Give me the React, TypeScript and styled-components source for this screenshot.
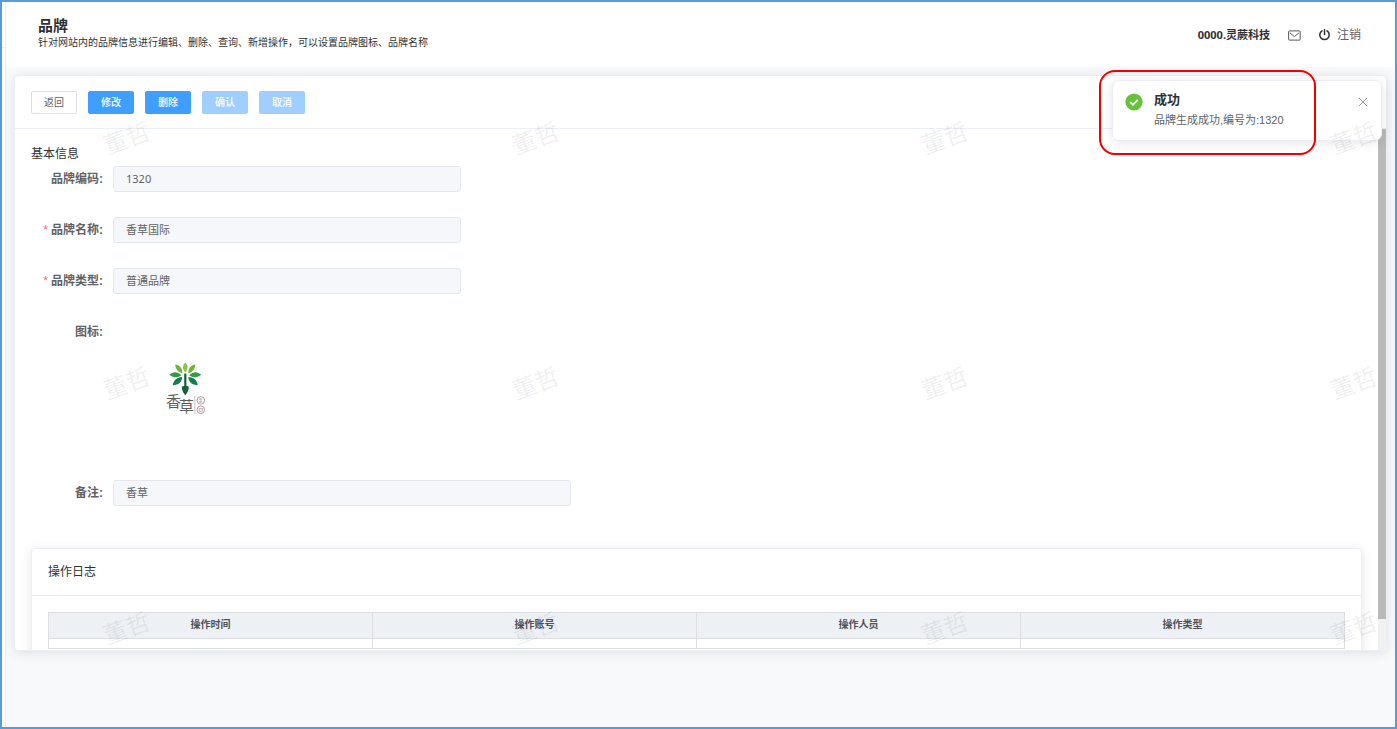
import React from 'react';
import styled, { createGlobalStyle, css } from 'styled-components';

const Global = createGlobalStyle`
  *, *::before, *::after { box-sizing: border-box; }
  body {
    margin: 0;
    color: #303133;
    background: #f8f9fb;
    font-family: "Liberation Sans", "Noto Sans CJK SC", sans-serif;
    font-size: 12px;
    line-height: 18px;
  }
  button, input { font-family: inherit; }
`;

const Frame = styled.div`
  position: relative;
  display: flex;
  height: 100vh;
  min-height: 480px;
  border: 2px solid #5b9bd5;
  overflow: hidden;
`;

const SideEdge = styled.aside`
  flex: none;
  width: 4px;
  background: #fff;
  border-right: 1px solid #ececee;
`;

const SideEdgeHead = styled.div`
  height: 46px;
  border-bottom: 1px solid #ececee;
`;

const Page = styled.div`
  flex: 1;
  min-width: 0;
  display: flex;
  flex-direction: column;
`;

const Header = styled.header`
  flex: none;
  display: flex;
  justify-content: space-between;
  height: 65px;
  padding: 15px 34px 0 32px;
  background: #fff;
`;

const PageTitle = styled.h1`
  margin: 0;
  font-size: 15px;
  line-height: 18px;
  font-weight: 700;
`;

const PageNote = styled.p`
  margin: 0;
  font-size: 10px;
  line-height: 16px;
  color: #303133;
`;

const Account = styled.div`
  display: flex;
  align-items: center;
  height: 36px;
  gap: 18px;
`;

const UserName = styled.span`
  font-family: "Noto Sans", "Noto Sans CJK SC", sans-serif;
  font-size: 11px;
  font-weight: 700;
`;

const HeaderButton = styled.button`
  display: flex;
  align-items: center;
  gap: 7px;
  padding: 0;
  border: 0;
  background: none;
  color: #606266;
  font-size: 12px;
  line-height: 18px;
`;

const Main = styled.main`
  flex: 1;
  min-height: 0;
  display: flex;
  padding: 8px 8px 76px;
`;

const Panel = styled.section`
  flex: 1;
  min-width: 0;
  display: flex;
  flex-direction: column;
  background: #fff;
  border: 1px solid #ebeef5;
  border-radius: 4px;
  box-shadow: 0 2px 12px rgba(0, 0, 0, 0.1);
  overflow: hidden;
`;

const Toolbar = styled.div`
  flex: none;
  display: flex;
  gap: 11px;
  height: 53px;
  padding: 15px 16px 14px;
  border-bottom: 1px solid #ebeef5;
`;

const Button = styled.button<{ $primary?: boolean }>`
  width: 46px;
  height: 23px;
  padding: 0;
  border: 1px solid #dcdfe6;
  border-radius: 2px;
  background: #fff;
  color: #606266;
  font-size: 10px;
  line-height: 20px;
  ${(p) =>
    p.$primary &&
    css`
      border-color: #409eff;
      background: #409eff;
      color: #fff;
      font-weight: 500;
      &:disabled {
        border-color: #a0cfff;
        background: #a0cfff;
      }
    `}
`;

const ScrollRegion = styled.div`
  flex: 1;
  min-height: 0;
  display: flex;
`;

const Content = styled.div`
  flex: 1;
  min-width: 0;
  padding: 16px 16px 0;
  overflow: hidden;
`;

const ScrollTrack = styled.div`
  flex: none;
  width: 8px;
  background: #f1f1f1;
`;

const ScrollThumb = styled.div`
  height: 94%;
  background: #b9b9b9;
`;

const SectionTitle = styled.h2`
  margin: 0 0 3px;
  font-size: 12px;
  line-height: 18px;
  font-weight: 400;
`;

const Form = styled.form`
  display: flex;
  flex-direction: column;
  gap: 25px;
`;

const Field = styled.div`
  display: flex;
  gap: 10px;
`;

const Label = styled.label<{ $required?: boolean }>`
  flex: none;
  width: 72px;
  text-align: right;
  line-height: 26px;
  font-weight: 700;
  color: #606266;
  white-space: nowrap;
  ${(p) =>
    p.$required &&
    css`
      &::before {
        content: '*';
        margin-right: 3px;
        font-weight: 400;
        color: #f56c6c;
      }
    `}
`;

const TextInput = styled.input<{ $wide?: boolean }>`
  width: ${(p) => (p.$wide ? '458px' : '348px')};
  height: 26px;
  padding: 0 12px 2px;
  border: 1px solid #e4e7ed;
  border-radius: 3px;
  background: #f5f7fa;
  color: #606266;
  font-family: "Noto Sans", "Noto Sans CJK SC", sans-serif;
  font-size: 11px;
`;

const LogoBox = styled.div`
  height: 136px;
  padding: 40px 0 0 49px;
`;

const LogCard = styled.section`
  margin-top: 42px;
  border: 1px solid #ebeef5;
  border-radius: 4px;
  background: #fff;
  box-shadow: 0 2px 12px rgba(0, 0, 0, 0.1);
`;

const LogTitle = styled.h2`
  margin: 0;
  padding: 14px 16px;
  border-bottom: 1px solid #ebeef5;
  font-size: 12px;
  line-height: 18px;
  font-weight: 400;
`;

const LogBody = styled.div`
  padding: 16px;
`;

const Table = styled.table`
  width: 100%;
  table-layout: fixed;
  border-collapse: collapse;
`;

const Th = styled.th`
  height: 26px;
  padding: 0 0 2px;
  border: 1px solid #dcdee2;
  background: #edf1f6;
  color: #505256;
  font-size: 10px;
  line-height: 14px;
`;

const Td = styled.td`
  height: 10px;
  padding: 0;
  border: 1px solid #dcdee2;
`;

const Toast = styled.div`
  position: absolute;
  top: 78px;
  right: 13px;
  display: flex;
  align-items: flex-start;
  gap: 11px;
  width: 270px;
  padding: 9px 13px 10px 12px;
  border: 1px solid #ebeef5;
  border-radius: 7px;
  background: #fff;
  box-shadow: 0 2px 12px rgba(0, 0, 0, 0.1);
`;

const ToastIcon = styled.svg`
  flex: none;
  margin-top: 3px;
`;

const ToastText = styled.div`
  flex: 1;
`;

const ToastTitle = styled.h3`
  margin: 0;
  font-size: 13px;
  line-height: 20px;
  font-weight: 700;
`;

const ToastMessage = styled.p`
  margin: 0;
  font-size: 11px;
  line-height: 20px;
  color: #606266;
`;

const CloseButton = styled.button`
  display: flex;
  margin-top: 7px;
  padding: 0;
  border: 0;
  background: none;
  color: #909399;
`;

const Highlight = styled.div`
  position: absolute;
  top: 68px;
  right: 79px;
  width: 217px;
  height: 85px;
  border: 2px solid #f00000;
  border-radius: 16px;
  pointer-events: none;
`;

const Watermarks = styled.div`
  position: absolute;
  inset: 0;
  display: grid;
  grid-template-columns: repeat(4, 409px);
  grid-auto-rows: 245px;
  padding: 122px 0 0 101px;
  overflow: hidden;
  pointer-events: none;
`;

const Watermark = styled.span`
  justify-self: start;
  align-self: start;
  font-size: 24px;
  line-height: 30px;
  color: rgba(0, 0, 0, 0.07);
  transform: rotate(-20deg);
`;

const MailIcon = () => (
  <svg width="13" height="11" viewBox="0 0 13 11" fill="none" stroke="#5d5560" aria-hidden="true">
    <rect x="0.6" y="0.9" width="11.6" height="9.2" rx="0.8" />
    <path d="M1.8 2.800 6.400 6.600 11 2.800" />
  </svg>
);

const PowerIcon = () => (
  <svg width="11" height="12" viewBox="0 0 11 12" fill="none" stroke="#303133" strokeWidth="1.5" strokeLinecap="round" aria-hidden="true">
    <path d="M3 1.900A4.700 4.700 0 1 0 8 1.900" />
    <path d="M5.500 0.800V5.600" />
  </svg>
);

const BrandLogo = () => (
  <svg width="46" height="60" viewBox="0 0 46 60" role="img" aria-label="香草">
    <g>
      <path d="M23.300 3.500C26.300 6.500 26.300 10 23.300 13.500C20.300 10 20.300 6.500 23.300 3.500Z" fill="#8cc63e" />
      <path d="M13.200 5.400C18 6 20.200 9 20.400 14C15.800 13.200 13.600 10 13.200 5.400Z" fill="#6fb53c" />
      <path d="M33.400 5.400C28.600 6 26.400 9 26.200 14C30.800 13.200 33 10 33.400 5.400Z" fill="#6fb53c" />
      <path d="M7.400 15.800C11.400 12 15.400 12.400 19.400 16.200C15.400 19 11 19 7.400 15.800Z" fill="#2f9a48" />
      <path d="M39.200 15.800C35.200 12 31.200 12.400 27.200 16.200C31.200 19 35.600 19 39.200 15.800Z" fill="#2f9a48" />
      <path d="M10.800 26.200C11.400 21.400 14.600 18.400 20.200 18C20 23 16.600 26.200 10.800 26.200Z" fill="#0f8048" />
      <path d="M35.800 26.200C35.200 21.400 32 18.400 26.400 18C26.600 23 30 26.200 35.800 26.200Z" fill="#0f8048" />
      <path d="M22.200 14.600H24.400V28H22.200Z" fill="#12603c" />
      <path d="M19.800 27.800Q23.300 25.800 26.800 27.800Q26.800 32.400 23.300 36.200Q19.800 32.400 19.800 27.800Z" fill="#12603c" />
    </g>
    <text x="4" y="48" fontSize="15" fill="#5c5c5c">香</text>
    <text x="17" y="53" fontSize="15" fill="#5c5c5c">草</text>
    <path d="M32.800 37V55" stroke="#c4c0c0" />
    <g fill="none" stroke="#b39a9c">
      <circle cx="38.800" cy="41.400" r="3.800" />
      <circle cx="38.800" cy="50.800" r="3.800" />
      <path strokeWidth="0.800" d="M37 40H40.600M38.800 40V43M37 43H40.600M37.200 49.400H40.400V52.200H37.200Z" />
    </g>
  </svg>
);

const fields = [
  { id: 'brand-code', label: '品牌编码:', value: '1320', required: false },
  { id: 'brand-name', label: '品牌名称:', value: '香草国际', required: true },
  { id: 'brand-type', label: '品牌类型:', value: '普通品牌', required: true },
];

const columns = ['操作时间', '操作账号', '操作人员', '操作类型'];
const watermarks = Array.from({ length: 12 }, (_, i) => i);

export default function App() {
  return (
    <>
      <Global />
      <Frame>
        <SideEdge>
          <SideEdgeHead />
        </SideEdge>
        <Page>
          <Header>
            <div>
              <PageTitle>品牌</PageTitle>
              <PageNote>针对网站内的品牌信息进行编辑、删除、查询、新增操作，可以设置品牌图标、品牌名称</PageNote>
            </div>
            <Account>
              <UserName>0000.灵蕨科技</UserName>
              <HeaderButton type="button" aria-label="消息">
                <MailIcon />
              </HeaderButton>
              <HeaderButton type="button">
                <PowerIcon />
                注销
              </HeaderButton>
            </Account>
          </Header>
          <Main>
            <Panel>
              <Toolbar>
                <Button type="button">返回</Button>
                <Button type="button" $primary>修改</Button>
                <Button type="button" $primary>删除</Button>
                <Button type="button" $primary disabled>确认</Button>
                <Button type="button" $primary disabled>取消</Button>
              </Toolbar>
              <ScrollRegion>
                <Content>
                  <SectionTitle>基本信息</SectionTitle>
                  <Form>
                    {fields.map((f) => (
                      <Field key={f.id}>
                        <Label htmlFor={f.id} $required={f.required}>{f.label}</Label>
                        <TextInput id={f.id} defaultValue={f.value} disabled />
                      </Field>
                    ))}
                    <Field>
                      <Label as="span">图标:</Label>
                      <LogoBox>
                        <BrandLogo />
                      </LogoBox>
                    </Field>
                    <Field>
                      <Label htmlFor="brand-remark">备注:</Label>
                      <TextInput id="brand-remark" defaultValue="香草" disabled $wide />
                    </Field>
                  </Form>
                  <LogCard>
                    <LogTitle>操作日志</LogTitle>
                    <LogBody>
                      <Table>
                        <thead>
                          <tr>
                            {columns.map((c) => (
                              <Th key={c} scope="col">{c}</Th>
                            ))}
                          </tr>
                        </thead>
                        <tbody>
                          <tr>
                            {columns.map((c) => (
                              <Td key={c} />
                            ))}
                          </tr>
                        </tbody>
                      </Table>
                    </LogBody>
                  </LogCard>
                </Content>
                <ScrollTrack>
                  <ScrollThumb />
                </ScrollTrack>
              </ScrollRegion>
            </Panel>
          </Main>
        </Page>
        <Toast role="alert">
          <ToastIcon width="18" height="18" viewBox="0 0 18 18" aria-hidden="true">
            <circle cx="9" cy="9" r="8.600" fill="#67c23a" />
            <path d="M5.200 9.200 8 11.800 12.800 6.800" fill="none" stroke="#fff" strokeWidth="1.800" />
          </ToastIcon>
          <ToastText>
            <ToastTitle>成功</ToastTitle>
            <ToastMessage>品牌生成成功,编号为:1320</ToastMessage>
          </ToastText>
          <CloseButton type="button" aria-label="关闭">
            <svg width="10" height="10" viewBox="0 0 10 10" stroke="currentColor" aria-hidden="true">
              <path d="M1 1 9 9M9 1 1 9" />
            </svg>
          </CloseButton>
        </Toast>
        <Watermarks aria-hidden="true">
          {watermarks.map((i) => (
            <Watermark key={i}>董哲</Watermark>
          ))}
        </Watermarks>
        <Highlight />
      </Frame>
    </>
  );
}
